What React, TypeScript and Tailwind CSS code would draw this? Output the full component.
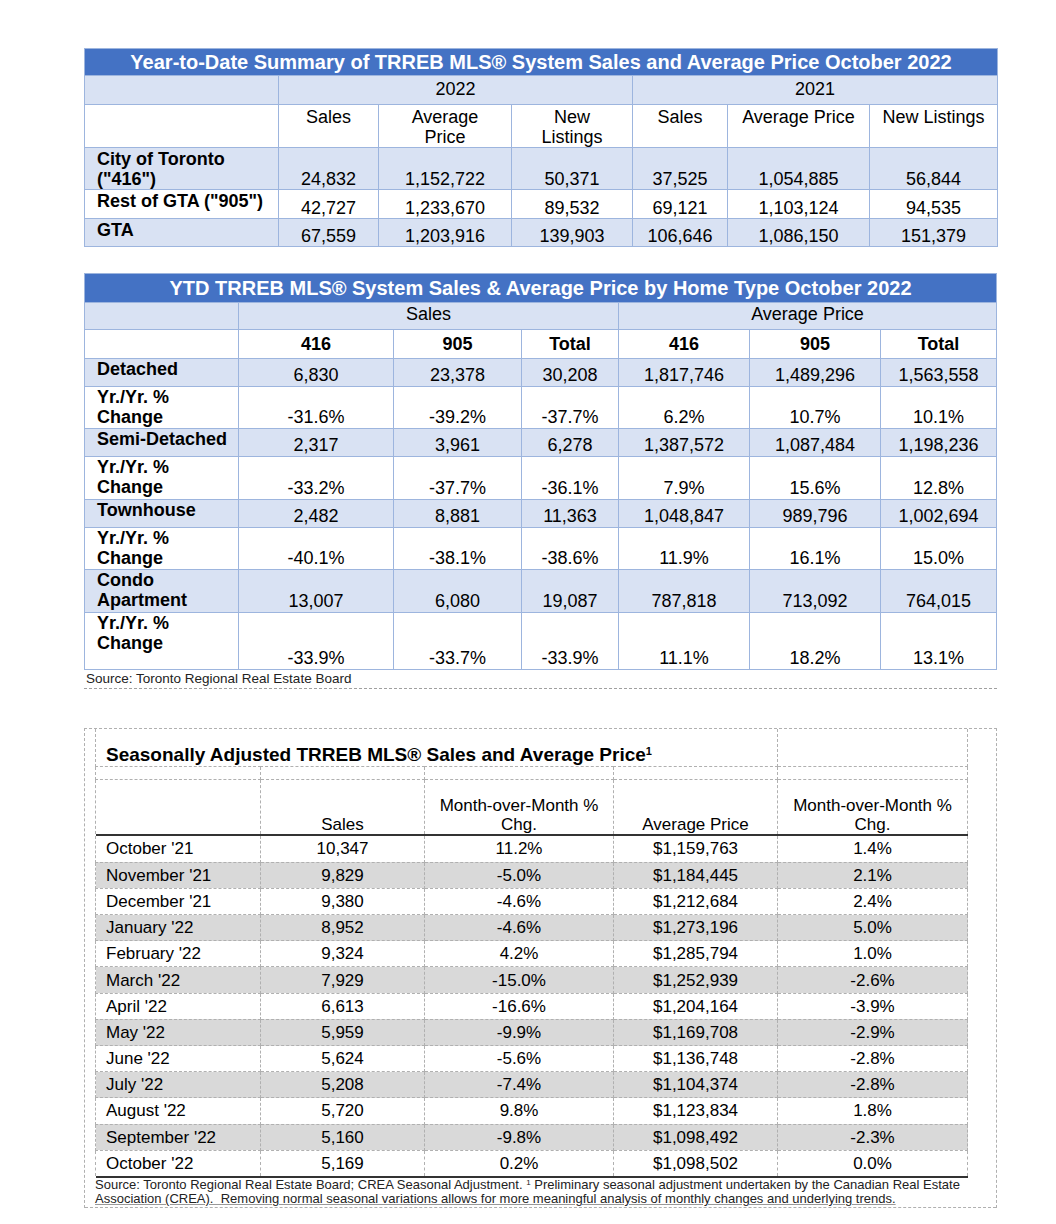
import React from "react";

const lb = "border border-[#9DB5DE]";

const ytd = [
  { label: ["City of Toronto", '("416")'], vals: ["24,832", "1,152,722", "50,371", "37,525", "1,054,885", "56,844"], h: "h-[42px]", fill: true },
  { label: ['Rest of GTA ("905")'], vals: ["42,727", "1,233,670", "89,532", "69,121", "1,103,124", "94,535"], h: "h-[29px]", fill: false },
  { label: ["GTA"], vals: ["67,559", "1,203,916", "139,903", "106,646", "1,086,150", "151,379"], h: "h-[28px]", fill: true },
];

const homeTypes = [
  { label: ["Detached"], vals: ["6,830", "23,378", "30,208", "1,817,746", "1,489,296", "1,563,558"], h: "h-[28px]", fill: true },
  { label: ["Yr./Yr. %", "Change"], vals: ["-31.6%", "-39.2%", "-37.7%", "6.2%", "10.7%", "10.1%"], h: "h-[42px]", fill: false },
  { label: ["Semi-Detached"], vals: ["2,317", "3,961", "6,278", "1,387,572", "1,087,484", "1,198,236"], h: "h-[28px]", fill: true },
  { label: ["Yr./Yr. %", "Change"], vals: ["-33.2%", "-37.7%", "-36.1%", "7.9%", "15.6%", "12.8%"], h: "h-[43px]", fill: false },
  { label: ["Townhouse"], vals: ["2,482", "8,881", "11,363", "1,048,847", "989,796", "1,002,694"], h: "h-[28px]", fill: true },
  { label: ["Yr./Yr. %", "Change"], vals: ["-40.1%", "-38.1%", "-38.6%", "11.9%", "16.1%", "15.0%"], h: "h-[42px]", fill: false },
  { label: ["Condo", "Apartment"], vals: ["13,007", "6,080", "19,087", "787,818", "713,092", "764,015"], h: "h-[43px]", fill: true },
  { label: ["Yr./Yr. %", "Change"], vals: ["-33.9%", "-33.7%", "-33.9%", "11.1%", "18.2%", "13.1%"], h: "h-[57px]", fill: false },
];

const monthly = [
  ["October '21", "10,347", "11.2%", "$1,159,763", "1.4%"],
  ["November '21", "9,829", "-5.0%", "$1,184,445", "2.1%"],
  ["December '21", "9,380", "-4.6%", "$1,212,684", "2.4%"],
  ["January '22", "8,952", "-4.6%", "$1,273,196", "5.0%"],
  ["February '22", "9,324", "4.2%", "$1,285,794", "1.0%"],
  ["March '22", "7,929", "-15.0%", "$1,252,939", "-2.6%"],
  ["April '22", "6,613", "-16.6%", "$1,204,164", "-3.9%"],
  ["May '22", "5,959", "-9.9%", "$1,169,708", "-2.9%"],
  ["June '22", "5,624", "-5.6%", "$1,136,748", "-2.8%"],
  ["July '22", "5,208", "-7.4%", "$1,104,374", "-2.8%"],
  ["August '22", "5,720", "9.8%", "$1,123,834", "1.8%"],
  ["September '22", "5,160", "-9.8%", "$1,098,492", "-2.3%"],
  ["October '22", "5,169", "0.2%", "$1,098,502", "0.0%"],
];

const dash = "border border-dashed border-[#B0B0B0]";

// solid rule row inside the dashed table
const Rule = () => (
  <tr className="h-[2px]">
    <td colSpan={5} className="p-0 h-[2px] bg-[#333]"></td>
  </tr>
);

export default function App() {
  return (
    <div className="w-[1056px] h-[1224px] bg-white text-black font-['Liberation_Sans',Arial,sans-serif] pt-[48px] pl-[84px]">
      {/* YTD summary */}
      <table className="table-fixed border-collapse w-[913px] text-[18px] leading-5">
        <colgroup>
          <col className="w-[194px]" />
          <col className="w-[100px]" />
          <col className="w-[133px]" />
          <col className="w-[121px]" />
          <col className="w-[95px]" />
          <col className="w-[142px]" />
          <col className="w-[128px]" />
        </colgroup>
        <tbody>
          <tr className="h-[27px]">
            <td colSpan={7} className={`${lb} bg-[#4472C4] text-white font-bold text-[20px] text-center`}>
              Year-to-Date Summary of TRREB MLS® System Sales and Average Price October 2022
            </td>
          </tr>
          <tr className="h-[29px] bg-[#D9E2F3]">
            <td className={lb}></td>
            <td colSpan={3} className={`${lb} text-center align-top pt-[3px]`}>2022</td>
            <td colSpan={3} className={`${lb} text-center align-top pt-[3px]`}>2021</td>
          </tr>
          <tr className="h-[42px]">
            <td className={lb}></td>
            {[["Sales"], ["Average", "Price"], ["New", "Listings"], ["Sales"], ["Average Price"], ["New Listings"]].map((h, i) => (
              <td key={i} className={`${lb} text-center align-top pt-[2px]`}>
                {h.map((l) => (
                  <div key={l}>{l}</div>
                ))}
              </td>
            ))}
          </tr>
          {ytd.map((r) => (
            <tr key={r.label[0]} className={`${r.h} ${r.fill ? "bg-[#D9E2F3]" : "bg-white"}`}>
              <td className={`${lb} align-top pl-3 pt-px font-bold`}>
                {r.label.map((l) => (
                  <div key={l}>{l}</div>
                ))}
              </td>
              {r.vals.map((v, i) => (
                <td key={i} className={`${lb} text-center align-bottom`}>
                  {v}
                </td>
              ))}
            </tr>
          ))}
        </tbody>
      </table>

      {/* YTD by home type */}
      <table className="table-fixed border-collapse w-[912px] mt-[26px] text-[18px] leading-5">
        <colgroup>
          <col className="w-[154px]" />
          <col className="w-[155px]" />
          <col className="w-[128px]" />
          <col className="w-[97px]" />
          <col className="w-[131px]" />
          <col className="w-[131px]" />
          <col className="w-[116px]" />
        </colgroup>
        <tbody>
          <tr className="h-[29px]">
            <td colSpan={7} className={`${lb} bg-[#4472C4] text-white font-bold text-[20px] text-center`}>
              YTD TRREB MLS® System Sales &amp; Average Price by Home Type October 2022
            </td>
          </tr>
          <tr className="h-[27px] bg-[#D9E2F3]">
            <td className={lb}></td>
            <td colSpan={3} className={`${lb} text-center align-top pt-px`}>Sales</td>
            <td colSpan={3} className={`${lb} text-center align-top pt-px`}>Average Price</td>
          </tr>
          <tr className="h-[29px]">
            <td className={lb}></td>
            {["416", "905", "Total", "416", "905", "Total"].map((h, i) => (
              <td key={i} className={`${lb} text-center font-bold`}>
                {h}
              </td>
            ))}
          </tr>
          {homeTypes.map((r, idx) => (
            <tr key={idx} className={`${r.h} ${r.fill ? "bg-[#D9E2F3]" : "bg-white"}`}>
              <td className={`${lb} align-top pl-3 font-bold`}>
                {r.label.map((l) => (
                  <div key={l}>{l}</div>
                ))}
              </td>
              {r.vals.map((v, i) => (
                <td key={i} className={`${lb} align-bottom pb-px text-center`}>
                  {v}
                </td>
              ))}
            </tr>
          ))}
        </tbody>
      </table>
      <div className="w-[913px] h-[19px] border-b border-dashed border-[#A0A0A0] text-[13.5px] leading-[18px] pl-[2px] text-[#222]">
        Source: Toronto Regional Real Estate Board
      </div>

      {/* Seasonally adjusted */}
      <div className="mt-[39px] w-[913px] border border-dashed border-[#B0B0B0] border-b-0 pl-[10px] pr-[29px]">
        <table className="table-fixed border-collapse w-[872px] text-[17px] leading-[19px]">
          <colgroup>
            <col className="w-[165px]" />
            <col className="w-[164px]" />
            <col className="w-[189px]" />
            <col className="w-[164px]" />
            <col className="w-[190px]" />
          </colgroup>
          <tbody>
            <tr className="h-[37px]">
              <td colSpan={4} className={`${dash} border-t-0 align-bottom pl-[10px] pb-0 font-bold text-[19px] leading-[22px]`}>
                Seasonally Adjusted TRREB MLS® Sales and Average Price<sup className="text-[11px]">1</sup>
              </td>
              <td className={`${dash} border-t-0`}></td>
            </tr>
            <tr className="h-[13px]">
              {[0, 1, 2, 3, 4].map((i) => (
                <td key={i} className={dash}></td>
              ))}
            </tr>
            <tr className="h-[55px]">
              <td className={`${dash} border-b-0`}></td>
              {[["Sales"], ["Month-over-Month %", "Chg."], ["Average Price"], ["Month-over-Month %", "Chg."]].map((h, i) => (
                <td key={i} className={`${dash} border-b-0 text-center align-bottom pb-0`}>
                  {h.map((l) => (
                    <div key={l}>{l}</div>
                  ))}
                </td>
              ))}
            </tr>
            <Rule />
            {monthly.map((r, idx) => (
              <tr
                key={r[0]}
                className={`h-[26.2px] ${idx % 2 === 1 ? "bg-[#D9D9D9]" : "bg-white"}`}
              >
                {r.map((v, i) => (
                  <td
                    key={i}
                    className={`${dash} ${idx === 0 ? "border-t-0" : ""} ${idx === monthly.length - 1 ? "border-b-0" : ""} ${i === 0 ? "pl-[10px]" : "text-center"}`}
                  >
                    {v}
                  </td>
                ))}
              </tr>
            ))}
            <Rule />
          </tbody>
        </table>
        <div className="text-[13px] leading-[14px] pb-px text-[#222] border-b border-dashed border-[#B0B0B0] -ml-[10px] pl-[10px] -mr-[29px]">
          <div>
            Source: Toronto Regional Real Estate Board; CREA Seasonal Adjustment. <sup className="text-[8px]">1</sup> Preliminary seasonal adjustment undertaken by the Canadian Real Estate
          </div>
          <div className="underline decoration-[#999]">
            Association (CREA).&nbsp; Removing normal seasonal variations allows for more meaningful analysis of monthly changes and underlying trends.
          </div>
        </div>
      </div>
    </div>
  );
}
